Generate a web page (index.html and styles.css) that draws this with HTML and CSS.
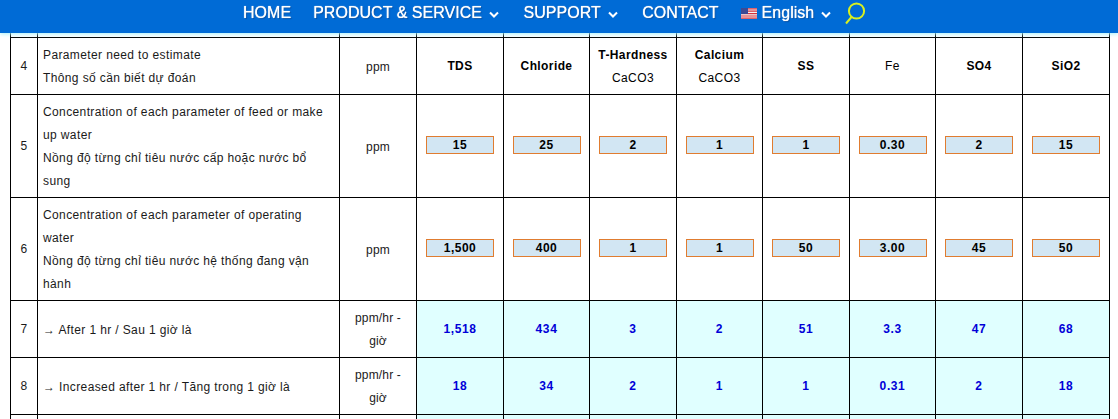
FILE: index.html
```
<!DOCTYPE html>
<html lang="vi">
<head>
<meta charset="utf-8">
<title>Parameter estimate</title>
<link rel="stylesheet" href="styles.css">
</head>
<body>
<header class="nav">
  <a class="nav-item">HOME</a>
  <a class="nav-item">PRODUCT &amp; SERVICE <svg class="chev" viewBox="0 0 10 7"><path d="M1 1.5l4 4 4-4"/></svg></a>
  <a class="nav-item">SUPPORT <svg class="chev" viewBox="0 0 10 7"><path d="M1 1.5l4 4 4-4"/></svg></a>
  <a class="nav-item">CONTACT</a>
  <a class="nav-item lang"><svg class="flag" viewBox="0 0 16 11"><rect width="16" height="11" fill="#f4f4f4"/><path d="M0 .8h16M0 3.2h16M0 5.6h16M0 8h16M0 10.2h16" stroke="#d8323c" stroke-width="1.2"/><rect width="7" height="6" fill="#3c4a94"/></svg> English <svg class="chev" viewBox="0 0 10 7"><path d="M1 1.5l4 4 4-4"/></svg></a>
  <svg class="search" viewBox="0 0 22 22"><circle cx="12.5" cy="9" r="7.6"/><path d="M7.5 15L2 21.5"/></svg>
</header>
<main class="page">
<table class="grid">
  <colgroup>
    <col class="c-no"><col class="c-desc"><col class="c-unit">
    <col class="c-a"><col class="c-b"><col class="c-a"><col class="c-b"><col class="c-a"><col class="c-b"><col class="c-a"><col class="c-a">
  </colgroup>
  <tr class="stub"><td></td><td></td><td></td><td></td><td></td><td></td><td></td><td></td><td></td><td></td><td></td></tr>
  <tr class="r57">
    <td class="ctr">4</td>
    <td class="desc">Parameter need to estimate<br>Thông số cần biết dự đoán</td>
    <td class="ctr unit">ppm</td>
    <th>TDS</th><th>Chloride</th><th>T-Hardness<br><span class="sub">CaCO3</span></th><th>Calcium<br><span class="sub">CaCO3</span></th><th>SS</th><th><span class="sub">Fe</span></th><th>SO4</th><th>SiO2</th>
  </tr>
  <tr class="r103">
    <td class="ctr">5</td>
    <td class="desc">Concentration of each parameter of feed or make up water<br>Nồng độ từng chỉ tiêu nước cấp hoặc nước bổ sung</td>
    <td class="ctr unit">ppm</td>
    <td class="ctr"><input class="val" value="15"></td><td class="ctr"><input class="val" value="25"></td><td class="ctr"><input class="val" value="2"></td><td class="ctr"><input class="val" value="1"></td><td class="ctr"><input class="val" value="1"></td><td class="ctr"><input class="val" value="0.30"></td><td class="ctr"><input class="val" value="2"></td><td class="ctr"><input class="val" value="15"></td>
  </tr>
  <tr class="r103">
    <td class="ctr">6</td>
    <td class="desc">Concentration of each parameter of operating water<br>Nồng độ từng chỉ tiêu nước hệ thống đang vận hành</td>
    <td class="ctr unit">ppm</td>
    <td class="ctr"><input class="val" value="1,500"></td><td class="ctr"><input class="val" value="400"></td><td class="ctr"><input class="val" value="1"></td><td class="ctr"><input class="val" value="1"></td><td class="ctr"><input class="val" value="50"></td><td class="ctr"><input class="val" value="3.00"></td><td class="ctr"><input class="val" value="45"></td><td class="ctr"><input class="val" value="50"></td>
  </tr>
  <tr class="r57">
    <td class="ctr">7</td>
    <td class="desc">→ After 1 hr / Sau 1 giờ là</td>
    <td class="ctr unit">ppm/hr - giờ</td>
    <td class="res">1,518</td><td class="res">434</td><td class="res">3</td><td class="res">2</td><td class="res">51</td><td class="res">3.3</td><td class="res">47</td><td class="res">68</td>
  </tr>
  <tr class="r57">
    <td class="ctr">8</td>
    <td class="desc">→ Increased after 1 hr / Tăng trong 1 giờ là</td>
    <td class="ctr unit">ppm/hr - giờ</td>
    <td class="res">18</td><td class="res">34</td><td class="res">2</td><td class="res">1</td><td class="res">1</td><td class="res">0.31</td><td class="res">2</td><td class="res">18</td>
  </tr>
  <tr class="r57">
    <td></td><td></td><td></td>
    <td class="res"></td><td class="res"></td><td class="res"></td><td class="res"></td><td class="res"></td><td class="res"></td><td class="res"></td><td class="res"></td>
  </tr>
</table>
</main>
</body>
</html>
```
FILE: styles.css
```
html, body {
  margin: 0;
  height: 419px;
  overflow: hidden;
  background: #fff;
}
body {
  font-family: "Liberation Sans", Arial, sans-serif;
  font-size: 12px;
  color: #1a1a1a;
}
.nav {
  position: fixed;
  top: 0;
  left: 0;
  right: 0;
  height: 33px;
  box-sizing: border-box;
  padding: 0 0 7px 243px;
  display: flex;
  align-items: center;
  gap: 22px;
  background: #006bd6;
  color: #fff;
  font-size: 16px;
  letter-spacing: 0.03px;
  text-shadow: 0 0 1px #fff, 1px 1px 1px rgba(0, 40, 100, .5);
  box-shadow: 0 1px 4px #a5f0fa;
}
.nav-item {
  display: flex;
  align-items: center;
  gap: 5px;
  white-space: nowrap;
}
.lang { gap: 5px; }
.chev {
  width: 10px;
  height: 7px;
  margin: 2px 2.5px 0 2px;
  fill: none;
  stroke: #fff;
  stroke-width: 2;
}
.flag { width: 16px; height: 11px; }
.search {
  width: 22px;
  height: 24px;
  margin-left: -12px;
  fill: none;
  stroke: #d9f01e;
  stroke-width: 2;
}
.page { padding: 30px 0 0 10px; }
.grid {
  table-layout: fixed;
  border-collapse: collapse;
  width: 1099px;
}
.c-no { width: 27px; }
.c-desc { width: 302px; }
.c-unit { width: 77px; }
.c-a { width: 87px; }
.c-b { width: 86px; }
.grid td, .grid th {
  border: 1px solid #000;
  padding: 0 5px;
  line-height: 23px;
  letter-spacing: 0.15px;
  overflow: hidden;
}
.grid td.desc {
  padding: 2px 14px 0 5px;
  letter-spacing: 0.38px;
}
.grid td.unit { padding-top: 2px; }
.grid th {
  padding-top: 1px;
  text-align: center;
  font-weight: 700;
  color: #000;
  letter-spacing: 0.4px;
}
.sub { font-weight: 400; }
.stub { height: 7px; }
.r57 { height: 57px; }
.r103 { height: 103px; }
.ctr { text-align: center; }
.res {
  background: #e0ffff;
  color: #0000d8;
  font-weight: 700;
  text-align: center;
}
.grid td.res { letter-spacing: 0.6px; }
.val {
  display: block;
  box-sizing: border-box;
  width: 68px;
  height: 18px;
  margin: -2px auto 0;
  padding: 0;
  border: 1px solid #e07c30;
  background: #d2e6f3;
  color: #000;
  font: 700 12px "Liberation Sans", Arial, sans-serif;
  letter-spacing: 0.5px;
  text-align: center;
}
```
